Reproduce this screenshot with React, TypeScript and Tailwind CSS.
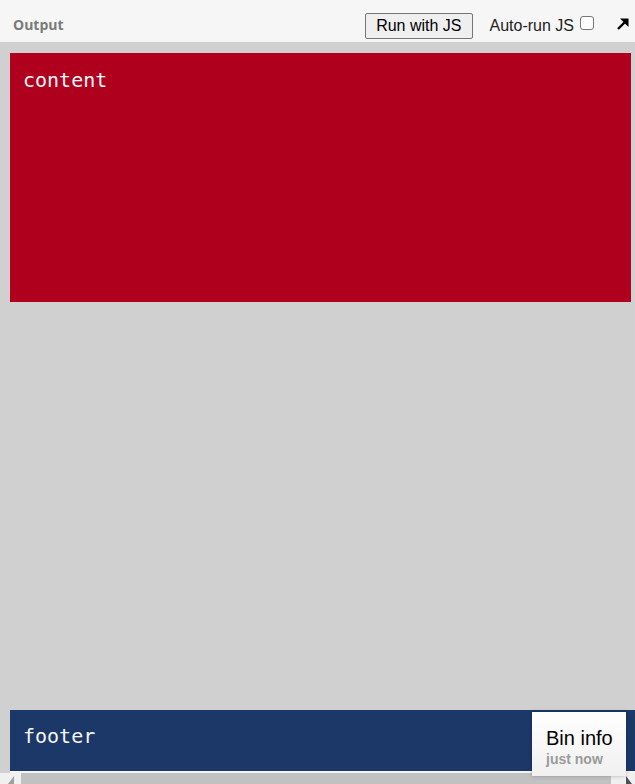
import React from "react";

export default function App() {
  return (
    <div className="relative flex h-[784px] w-[635px] flex-col overflow-hidden bg-[#d0d0d0]">
      <div className="flex h-[42px] shrink-0 items-start bg-[#f6f6f6] pl-[13px] pr-[5px]">
        <span className="mt-[15px] text-[14px] font-bold leading-[20px] text-[#7a7a7a] [font-family:'Open_Sans',sans-serif]">Output</span>
        <div className="ml-auto flex items-start [font-family:'Liberation_Sans',Arial,sans-serif]">
          <button className="mt-[13px] h-[26px] rounded-[2px] border border-[#767676] bg-[#efefef] px-[10px] text-[16px] leading-[20px] text-black">
            Run with JS
          </button>
          <span className="ml-[17px] mt-[16px] text-[16px] leading-[20px] text-[#222]">Auto-run JS</span>
          <span className="ml-[6px] mt-[16px] inline-block h-[14px] w-[14px] rounded-[3px] border border-[#767676] bg-white"></span>
          <svg className="ml-[22px] mt-[17px]" width="14" height="14" viewBox="0 0 14 14">
            <path d="M2 12 L10 4" stroke="#000" strokeWidth="2.4" fill="none" />
            <path d="M4 1.5 H12.5 V10 Z" fill="#000" />
          </svg>
        </div>
      </div>
      <div className="flex flex-1 flex-col pl-[10px] pt-[11px]">
        <div className="mr-[4px] h-[249px] bg-[#af001e] px-[13px] pt-[15px] text-[20px] leading-[24px] text-[#f7f7f7] [font-family:'DejaVu_Sans_Mono',monospace]">
          content
        </div>
        <div className="mt-auto h-[61px] bg-[#1b3868] px-[13px] pt-[14px] text-[20px] leading-[24px] text-[#f7f7f7] [font-family:'DejaVu_Sans_Mono',monospace]">
          footer
        </div>
        <div className="h-[2px] bg-[#f4f4f4]"></div>
      </div>
      <div className="flex h-[11px] shrink-0">
        <div className="flex w-[21px] items-end justify-center bg-[#f0f0f0]">
          <svg width="8" height="8" viewBox="0 0 8 8"><path d="M7 0 L7 8 L1 8 Z" fill="#a0a0a0" /></svg>
        </div>
        <div className="flex-1 bg-[#c1c1c1]"></div>
        <div className="flex w-[24px] items-end justify-end bg-[#f0f0f0] pr-[2px]">
          <svg width="8" height="8" viewBox="0 0 8 8"><path d="M1 0 L1 8 L7 8 Z" fill="#505050" /></svg>
        </div>
      </div>
      <div className="absolute left-[532px] top-[712px] h-[64px] w-[94px] bg-gradient-to-b from-white to-[#f0f0f0] pl-[14px] pt-[14px] shadow-[0_0_4px_rgba(0,0,0,0.25)] [font-family:'Liberation_Sans',Arial,sans-serif]">
        <div className="text-[20px] leading-[24px] text-black">Bin info</div>
        <div className="mt-[1px] text-[14px] font-bold leading-[16px] text-[#9a9a9a]">just now</div>
      </div>
    </div>
  );
}
